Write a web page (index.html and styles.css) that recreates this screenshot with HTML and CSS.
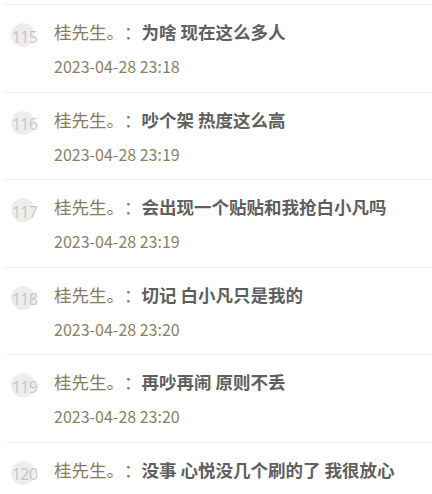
FILE: index.html
```html
<!DOCTYPE html>
<html>
<head>
<meta charset="utf-8">
<link rel="stylesheet" href="styles.css">
</head>
<body>
<div class="list">
  <div class="item">
    <div class="floor"><span class="num">115</span></div>
    <div class="body">
      <div class="line"><span class="name">桂先生。：</span><span class="text">为啥 现在这么多人</span></div>
      <div class="date">2023-04-28 23:18</div>
    </div>
  </div>
  <div class="item">
    <div class="floor"><span class="num">116</span></div>
    <div class="body">
      <div class="line"><span class="name">桂先生。：</span><span class="text">吵个架 热度这么高</span></div>
      <div class="date">2023-04-28 23:19</div>
    </div>
  </div>
  <div class="item">
    <div class="floor"><span class="num">117</span></div>
    <div class="body">
      <div class="line"><span class="name">桂先生。：</span><span class="text">会出现一个贴贴和我抢白小凡吗</span></div>
      <div class="date">2023-04-28 23:19</div>
    </div>
  </div>
  <div class="item">
    <div class="floor"><span class="num">118</span></div>
    <div class="body">
      <div class="line"><span class="name">桂先生。：</span><span class="text">切记 白小凡只是我的</span></div>
      <div class="date">2023-04-28 23:20</div>
    </div>
  </div>
  <div class="item">
    <div class="floor"><span class="num">119</span></div>
    <div class="body">
      <div class="line"><span class="name">桂先生。：</span><span class="text">再吵再闹 原则不丢</span></div>
      <div class="date">2023-04-28 23:20</div>
    </div>
  </div>
  <div class="item">
    <div class="floor"><span class="num">120</span></div>
    <div class="body">
      <div class="line"><span class="name">桂先生。：</span><span class="text">没事 心悦没几个刷的了 我很放心</span></div>
      <div class="date">2023-04-28 23:20</div>
    </div>
  </div>
</div>
</body>
</html>
```
FILE: styles.css
```css
html, body {
  margin: 0;
  padding: 0;
  background: #fff;
}
body {
  font-family: "Noto Sans CJK SC", "Noto Sans", sans-serif;
  overflow: hidden;
  height: 494px;
}
.list {
  padding-left: 4px;
  padding-top: 4px;
}
.item {
  display: flex;
  border-top: 1px solid #eeeeee;
  padding: 16px 0 14.5px 0;
}
.floor {
  width: 50px;
  flex: none;
  padding-top: 2px;
}
.num {
  display: flex;
  align-items: center;
  justify-content: flex-start;
  width: 24px;
  height: 24px;
  margin-left: 7px;
  padding-left: 1px;
  padding-top: 3px;
  box-sizing: border-box;
  border-radius: 50%;
  background: #ededed;
  color: #c6c6c6;
  font-family: "Open Sans", "Noto Sans", sans-serif;
  font-size: 16px;
  line-height: 24px;
  letter-spacing: -0.8px;
  white-space: nowrap;
}
.body {
  flex: 1;
  min-width: 0;
}
.line {
  font-size: 17.5px;
  line-height: 22px;
  white-space: nowrap;
  text-spacing-trim: space-all;
}
.name {
  color: #857a5e;
}
.text {
  color: #5f5f5f;
  font-weight: bold;
}
.date {
  margin-top: 12px;
  font-size: 16px;
  line-height: 22px;
  color: #8a7f63;
}
```
